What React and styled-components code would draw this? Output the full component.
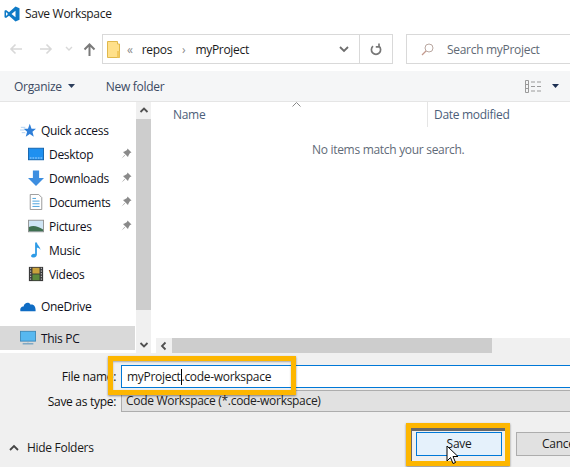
import React from 'react';
import styled, { createGlobalStyle } from 'styled-components';

const GlobalStyle = createGlobalStyle`
  html, body { margin: 0; padding: 0; background: #fff; overflow: hidden; }
  body { font-family: "Open Sans", "Noto Sans", sans-serif; }
`;

const Dialog = styled.div`
  position: relative;
  width: 570px;
  height: 467px;
  overflow: hidden;
  background: #fff;
  font-size: 12px;
  letter-spacing: -0.3px;
  color: #1a1a1a;
`;

const TitleBar = styled.div`
  height: 34px;
  padding: 3px 0 0 4px;
  box-sizing: border-box;
  display: flex;
  align-items: flex-start;
  gap: 5px;
  line-height: 22px;
`;

const NavRow = styled.div`
  height: 30px;
  display: flex;
  align-items: center;
  padding-left: 9px;
`;

const NavGlyph = styled.svg`
  flex: none;
  margin-right: ${(p) => p.$gap || 0}px;
`;

const AddressBox = styled.div`
  width: 291px;
  height: 30px;
  flex: none;
  box-sizing: border-box;
  border: 1px solid #d9d9d9;
  display: flex;
  align-items: center;
  margin-left: 6px;
  padding-left: 4px;
`;

const Crumb = styled.span`
  color: ${(p) => p.$muted ? '#8a8a8a' : '#1a1a1a'};
  margin: ${(p) => p.$margin || '0'};
`;

const AddressSpacer = styled.div`
  flex: 1;
`;

const RefreshSlot = styled.div`
  width: 32px;
  height: 28px;
  border-left: 1px solid #d9d9d9;
  display: flex;
  align-items: center;
  justify-content: center;
  margin-left: 10px;
`;

const SearchBox = styled.div`
  flex: 1;
  height: 30px;
  box-sizing: border-box;
  border: 1px solid #d9d9d9;
  border-right: none;
  margin-left: 13px;
  display: flex;
  align-items: center;
  padding-left: 14px;
  gap: 13px;
  color: #5f6a75;
`;

const Toolbar = styled.div`
  margin-top: 7px;
  height: 30px;
  background: #f5f6f7;
  border-bottom: 1px solid #e5e5e5;
  display: flex;
  align-items: center;
  padding-left: 14px;
  color: #3b4a63;
`;

const ToolButton = styled.div`
  display: flex;
  align-items: center;
  gap: 6px;
  margin-right: ${(p) => p.$gap || 0}px;
`;

const Main = styled.div`
  height: 251px;
  display: flex;
`;

const NavPane = styled.div`
  width: 136px;
  flex: none;
  padding-top: 16px;
  box-sizing: border-box;
`;

const TreeRow = styled.div`
  height: 24px;
  display: flex;
  align-items: center;
  padding-left: ${(p) => p.$indent}px;
  margin-top: ${(p) => p.$top || 0}px;
  margin-right: 1px;
  background: ${(p) => p.$selected ? '#d9d9d9' : 'transparent'};
  position: relative;
  color: #101020;
`;

const TreeIcon = styled.svg`
  width: 16px;
  height: 16px;
  flex: none;
  margin-right: 5px;
`;

const Pin = styled.svg`
  position: absolute;
  left: 121px;
  top: 6px;
`;

const VScroll = styled.div`
  width: 15px;
  flex: none;
  background: #f0f0f0;
  display: flex;
  flex-direction: column;
`;

const ScrollBtn = styled.div`
  height: ${(p) => p.$h || 16}px;
  width: ${(p) => p.$w || 'auto'};
  flex: none;
  display: flex;
  align-items: center;
  justify-content: center;
`;

const VThumb = styled.div`
  height: 191px;
  background: #cdcdcd;
  flex: none;
`;

const ScrollFill = styled.div`
  flex: 1;
`;

const FileArea = styled.div`
  flex: 1;
  margin-left: 4px;
  display: flex;
  flex-direction: column;
  position: relative;
`;

const ColumnHeader = styled.div`
  height: 25px;
  display: flex;
  color: #4c607a;
  position: relative;
`;

const Column = styled.div`
  width: ${(p) => p.$w}px;
  box-sizing: border-box;
  padding-left: ${(p) => p.$pad}px;
  line-height: 25px;
  border-right: ${(p) => p.$divider ? '1px solid #e5e5e5' : 'none'};
`;

const SortCaret = styled.svg`
  position: absolute;
  left: 137px;
  top: 0;
`;

const EmptyNote = styled.div`
  margin-top: 15px;
  margin-left: 157px;
  color: #5f6b78;
  height: 16px;
  line-height: 16px;
`;

const HScroll = styled.div`
  margin-top: auto;
  margin-left: 1px;
  height: 15px;
  background: #f0f0f0;
  display: flex;
`;

const HThumb = styled.div`
  width: 320px;
  background: #cdcdcd;
`;

const Bottom = styled.div`
  height: 115px;
  background: #f0f0f0;
  padding-top: 12px;
  box-sizing: border-box;
`;

const FieldRow = styled.div`
  display: flex;
  align-items: center;
  height: ${(p) => p.$h}px;
  margin-bottom: 2px;
`;

const FieldLabel = styled.div`
  width: 116px;
  text-align: right;
  flex: none;
  margin-right: 5px;
  color: #111;
`;

const FileInput = styled.div`
  flex: 1;
  height: 100%;
  box-sizing: border-box;
  background: #fff;
  border: 1px solid #0078d7;
  border-right: none;
  padding-left: 5px;
  display: flex;
  align-items: center;
  line-height: 20px;
`;

const Caret = styled.span`
  display: inline-block;
  width: 1px;
  height: 16px;
  background: #000;
  vertical-align: middle;
`;

const TypeSelect = styled.div`
  flex: 1;
  height: 100%;
  box-sizing: border-box;
  background: #e1e1e1;
  border: 1px solid #adadad;
  border-right: none;
  padding-left: 4px;
  line-height: 20px;
  color: #222;
`;

const ActionRow = styled.div`
  display: flex;
  align-items: center;
  margin-top: 20px;
  height: 24px;
  padding-left: 9px;
`;

const HideFolders = styled.div`
  display: flex;
  align-items: center;
  gap: 8px;
  width: 407px;
  flex: none;
  margin-top: 6px;
`;

const DialogButton = styled.div`
  width: ${(p) => p.$w}px;
  height: 24px;
  flex: none;
  box-sizing: border-box;
  border: 1px solid ${(p) => p.$active ? '#0078d7' : '#adadad'};
  background: ${(p) => p.$active ? '#e5f1fb' : '#e1e1e1'};
  text-align: center;
  line-height: 22px;
  margin-right: ${(p) => p.$gap || 0}px;
`;

const CancelLabel = styled.span`
  padding-left: 25px;
  display: block;
  text-align: left;
  white-space: nowrap;
`;

const Highlight = styled.div`
  position: absolute;
  left: ${(p) => p.$x}px;
  top: ${(p) => p.$y}px;
  width: ${(p) => p.$w}px;
  height: ${(p) => p.$h}px;
  box-sizing: border-box;
  border: 5px solid #fdb600;
  box-shadow: 0 1px 2px rgba(0, 0, 0, 0.45), inset ${(p) => p.$inset};
  pointer-events: none;
`;

const Cursor = styled.svg`
  position: absolute;
  left: 446px;
  top: 445px;
`;

const pin = (
  <Pin width="11" height="11" viewBox="0 0 11 11">
    <path d="M6.5 0.5 L10.5 4.5 L9 5 L7.5 7.5 L7 9 L2 4 L3.5 3.5 L6 2 Z M3.5 7 L0.5 10.5 L4 7.5 Z" fill="#8a8a8a" />
  </Pin>
);

function ToggleChevron({ dir }) {
  const points = {
    up: 'M1.5 6 L5 2.5 L8.5 6',
    down: 'M1.5 3 L5 6.5 L8.5 3',
    left: 'M6.5 1.5 L3 5 L6.5 8.5',
  }[dir];
  return (
    <svg width="10" height="10" viewBox="0 0 10 10">
      <path d={points} fill="none" stroke="#505050" strokeWidth="1.8" />
    </svg>
  );
}

export default function App() {
  return (
    <Dialog>
      <GlobalStyle />
      <TitleBar>
        <svg width="16" height="16" viewBox="0 0 16 16" style={{ marginTop: 3 }}>
          <path d="M11.5 0.5 L15.5 2.2 V13.8 L11.5 15.5 L5 9.8 L2 12 L0.5 11.2 V4.8 L2 4 L5 6.2 Z M11.5 4.8 L7.5 8 L11.5 11.2 Z M2 6 V10 L4 8 Z" fill="#0f7ac6" fillRule="evenodd" />
        </svg>
        Save Workspace
      </TitleBar>
      <NavRow>
        <NavGlyph width="14" height="12" viewBox="0 0 14 12" $gap={16}>
          <path d="M13 6 H2 M6.5 1.5 L2 6 L6.5 10.5" fill="none" stroke="#d8d8d8" strokeWidth="1.6" />
        </NavGlyph>
        <NavGlyph width="14" height="12" viewBox="0 0 14 12" $gap={12}>
          <path d="M1 6 H12 M7.5 1.5 L12 6 L7.5 10.5" fill="none" stroke="#d8d8d8" strokeWidth="1.6" />
        </NavGlyph>
        <NavGlyph width="8" height="6" viewBox="0 0 8 6" $gap={10}>
          <path d="M1 1 L4 4 L7 1" fill="none" stroke="#d8d8d8" strokeWidth="1.4" />
        </NavGlyph>
        <NavGlyph width="13" height="13" viewBox="0 0 13 13">
          <path d="M6.5 13 V2 M1.5 6.5 L6.5 1.5 L11.5 6.5" fill="none" stroke="#7a7a7a" strokeWidth="2" />
        </NavGlyph>
        <AddressBox>
          <svg width="13" height="17" viewBox="0 0 13 17">
            <path d="M0.5 0.5 H10.5 V3 H12.5 V16.5 H0.5 Z" fill="#ffe08a" stroke="#e0b84c" />
            <path d="M10 10 H12.5 V16.5 H10 Z" fill="#f2c95e" />
          </svg>
          <Crumb $muted $margin="0 9px 0 7px">«</Crumb>
          <Crumb>repos</Crumb>
          <Crumb $muted $margin="0 10px 0 10px">›</Crumb>
          <Crumb>myProject</Crumb>
          <AddressSpacer />
          <svg width="10" height="7" viewBox="0 0 10 7">
            <path d="M1 1 L5 5 L9 1" fill="none" stroke="#6d6d6d" strokeWidth="1.8" />
          </svg>
          <RefreshSlot>
            <svg width="12" height="13" viewBox="0 0 12 13">
              <path d="M3 3.2 A4.6 4.6 0 1 0 9 3.2 M9 0.5 V3.8 H5.8" fill="none" stroke="#777" strokeWidth="1.7" />
            </svg>
          </RefreshSlot>
        </AddressBox>
        <SearchBox>
          <svg width="13" height="13" viewBox="0 0 13 13">
            <circle cx="8" cy="5" r="4" fill="none" stroke="#b9a7a0" />
            <path d="M5 8 L1 12" stroke="#c39a8e" strokeWidth="1.2" />
          </svg>
          Search myProject
        </SearchBox>
      </NavRow>
      <Toolbar>
        <ToolButton $gap={31}>
          Organize
          <svg width="7" height="4" viewBox="0 0 7 4"><path d="M0 0 H7 L3.5 4 Z" fill="#2c3e5c" /></svg>
        </ToolButton>
        <ToolButton>New folder</ToolButton>
        <AddressSpacer />
        <svg width="17" height="13" viewBox="0 0 17 13" style={{ marginRight: 10 }}>
          <path d="M0.5 0.5 H3.5 V12.5 H0.5 Z M0.5 4.5 H3.5 M0.5 8.5 H3.5" fill="none" stroke="#9a9a9a" />
          <path d="M6 2 H10 M12 2 H16 M6 6.5 H10 M12 6.5 H16 M6 11 H10 M12 11 H16" stroke="#9a9a9a" />
        </svg>
        <svg width="7" height="4" viewBox="0 0 7 4" style={{ marginRight: 11 }}><path d="M0 0 H7 L3.5 4 Z" fill="#1c2f52" /></svg>
      </Toolbar>
      <Main>
        <NavPane>
          <TreeRow $indent={20}>
            <TreeIcon viewBox="0 0 18 18">
              <path d="M11 2 L13 7.5 H18 L14 11 L15.500 16.500 L11 13.500 L6.500 16.500 L8 11 L4 7.500 H9 Z" fill="#2f7fd8" />
              <path d="M1 6 H6 M0 9 H5 M2 12 H6" stroke="#a9cdf0" />
            </TreeIcon>
            Quick access
          </TreeRow>
          <TreeRow $indent={28}>
            <TreeIcon viewBox="0 0 18 18">
              <rect x="0.500" y="2.500" width="17" height="13" fill="#1e90f0" stroke="#0f5fa8" />
              <path d="M2 13.500 H16" stroke="#bfe0ff" strokeDasharray="2 1" />
            </TreeIcon>
            Desktop
            {pin}
          </TreeRow>
          <TreeRow $indent={28}>
            <TreeIcon viewBox="0 0 18 18">
              <path d="M5.500 0.500 H12.500 V9 H18 L9 18 L0 9 H5.500 Z" fill="#3d8ee0" />
            </TreeIcon>
            Downloads
            {pin}
          </TreeRow>
          <TreeRow $indent={28}>
            <TreeIcon viewBox="0 0 18 18">
              <path d="M2.500 0.500 H12 L15.500 4 V17.500 H2.500 Z" fill="#fff" stroke="#8e8e8e" />
              <path d="M5 5 H9 M5 8 H13 M5 11 H13 M5 14 H13" stroke="#3a9ad9" />
            </TreeIcon>
            Documents
            {pin}
          </TreeRow>
          <TreeRow $indent={28}>
            <TreeIcon viewBox="0 0 18 18">
              <rect x="0.500" y="2.500" width="17" height="13" fill="#cfe5f5" stroke="#8e8e8e" />
              <path d="M1 15 V10 C6 8 11 9 17 13 V15 Z" fill="#3f6f50" />
            </TreeIcon>
            Pictures
            {pin}
          </TreeRow>
          <TreeRow $indent={28}>
            <TreeIcon viewBox="0 0 18 18">
              <path d="M8 0.500 H10 C10.500 4 14 5 14 9 C13 7 11.500 6.500 10 6.500 V14 C10 16.500 7.500 17.500 5.500 17.500 C3 17.500 3 15 4.500 14 C5.500 13 7 13 8 13.500 Z" fill="#2e9be6" />
            </TreeIcon>
            Music
          </TreeRow>
          <TreeRow $indent={28}>
            <TreeIcon viewBox="0 0 18 18">
              <rect x="1" y="1" width="16" height="16" fill="#3a3a3a" />
              <rect x="5" y="2" width="8" height="6.500" fill="#c9a23c" />
              <rect x="5" y="9.500" width="8" height="6.500" fill="#5d8a3c" />
              <path d="M3 2 V16 M15 2 V16" stroke="#ddd" strokeDasharray="1.500 1.500" />
            </TreeIcon>
            Videos
          </TreeRow>
          <TreeRow $indent={20} $top={8}>
            <TreeIcon viewBox="0 0 18 18">
              <path d="M0.500 15 C-0.500 11 2 9 4 9.500 C5 5 10 4 12 7.500 C15 6.500 18 9.500 17.500 15 Z" fill="#0f6cc4" />
            </TreeIcon>
            OneDrive
          </TreeRow>
          <TreeRow $indent={20} $top={8} $selected>
            <TreeIcon viewBox="0 0 18 18">
              <rect x="0.500" y="1.500" width="17" height="11" fill="#57b8f0" stroke="#3d88b8" />
              <path d="M8 13 H10 M3 15.500 H15" stroke="#7fa8c4" strokeWidth="1.500" />
            </TreeIcon>
            This PC
          </TreeRow>
        </NavPane>
        <VScroll>
          <ScrollBtn $h={17}><ToggleChevron dir="up" /></ScrollBtn>
          <VThumb />
          <ScrollFill />
          <ScrollBtn $h={17}><ToggleChevron dir="down" /></ScrollBtn>
        </VScroll>
        <FileArea>
          <ColumnHeader>
            <SortCaret width="9" height="5" viewBox="0 0 9 5">
              <path d="M0.5 4.500 L4.500 0.500 L8.500 4.500" fill="none" stroke="#888" />
            </SortCaret>
            <Column $w={273} $pad={18} $divider>Name</Column>
            <Column $w={142} $pad={6}>Date modified</Column>
          </ColumnHeader>
          <EmptyNote>No items match your search.</EmptyNote>
          <HScroll>
            <ScrollBtn $w="16px" $h={15}><ToggleChevron dir="left" /></ScrollBtn>
            <HThumb />
          </HScroll>
        </FileArea>
      </Main>
      <Bottom>
        <FieldRow $h={23}>
          <FieldLabel>File name:</FieldLabel>
          <FileInput>myProject<Caret />.code-workspace</FileInput>
        </FieldRow>
        <FieldRow $h={22}>
          <FieldLabel>Save as type:</FieldLabel>
          <TypeSelect>Code Workspace (*.code-workspace)</TypeSelect>
        </FieldRow>
        <ActionRow>
          <HideFolders>
            <svg width="10" height="7" viewBox="0 0 10 7">
              <path d="M1 6 L5 2 L9 6" fill="none" stroke="#444" strokeWidth="1.800" />
            </svg>
            Hide Folders
          </HideFolders>
          <DialogButton $w={86} $gap={14} $active>Save</DialogButton>
          <DialogButton $w={80}><CancelLabel>Cancel</CancelLabel></DialogButton>
        </ActionRow>
      </Bottom>
      <Highlight $x={108} $y={356} $w={188} $h={39} $inset="0 1px 2px rgba(0, 0, 0, 0.3)" />
      <Highlight $x={406} $y={423} $w={104} $h={43} $inset="1px 3px 0 rgba(70, 70, 70, 0.8)" />
      <Cursor width="14" height="20" viewBox="0 0 14 20">
        <path d="M1 1 V16 L4.500 12.500 L7 18.500 L9.500 17.500 L7 11.500 H12 Z" fill="#fff" stroke="#000" strokeWidth="1" />
      </Cursor>
    </Dialog>
  );
}
